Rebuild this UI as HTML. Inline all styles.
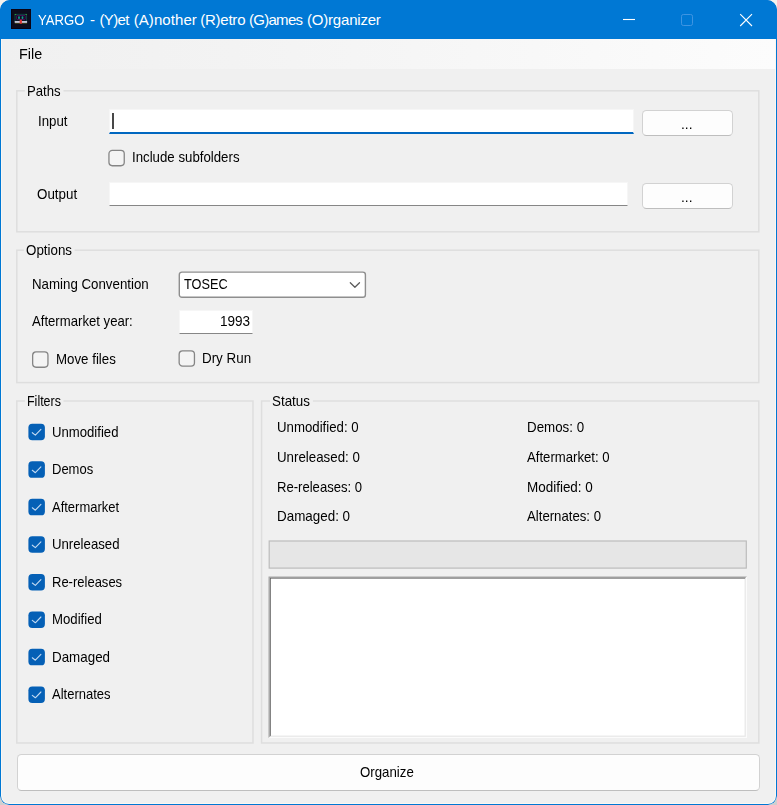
<!DOCTYPE html>
<html>
<head>
<meta charset="utf-8">
<title>YARGO</title>
<style>
html,body{margin:0;padding:0;}
body{width:777px;height:805px;overflow:hidden;background:#f4f2ee;position:relative;
  font-family:"Liberation Sans",sans-serif;font-size:15px;color:#000;}
#bgbot{position:absolute;left:0;top:780px;width:777px;height:25px;background:#cfcfcf;}
#win{position:absolute;left:0;top:0;width:777px;height:805px;border-radius:10px 10px 9px 9px;background:#f0f0f0;overflow:hidden;}
#frame{position:absolute;left:0;top:0;width:777px;height:805px;box-sizing:border-box;border:1px solid #0078d4;border-radius:10px 10px 9px 9px;pointer-events:none;}
#frame2{position:absolute;left:1px;top:39px;width:775px;height:765px;box-sizing:border-box;border:1px solid #fbf7f2;border-top:0;border-radius:0 0 8px 8px;pointer-events:none;}
#title{position:absolute;left:0;top:0;width:777px;height:39px;background:#0078d4;}
#title .t{position:absolute;font-size:15px;line-height:18px;color:#fff;white-space:nowrap;}
#menu{position:absolute;left:1px;top:39px;width:775px;height:30px;background:linear-gradient(90deg,#f0f0f0 0%,#f3f3f3 30%,#fcfcfc 100%);}
#menu .t{position:absolute;font-size:15px;line-height:18px;white-space:nowrap;transform-origin:0 0;}
.a{position:absolute;white-space:nowrap;}
.gb{position:absolute;border:1px solid #dcdcdc;box-sizing:border-box;}
.gl{position:absolute;line-height:16px;white-space:nowrap;transform-origin:0 0;background:#f0f0f0;box-shadow:-2px 0 0 #f0f0f0,2px 0 0 #f0f0f0;}
.l{position:absolute;line-height:16px;white-space:nowrap;transform-origin:0 0;}
.tb{position:absolute;background:#fff;box-sizing:border-box;border:1px solid #f6f6f6;border-bottom:1px solid #868686;}
.btn{position:absolute;box-sizing:border-box;border:1px solid #d2d2d2;border-bottom-color:#bebebe;border-radius:4.5px;background:#fdfdfd;}
.cb{position:absolute;width:16px;height:16px;box-sizing:border-box;border:1px solid #626262;border-radius:3.5px;background:#f5f5f5;}
.cbc{position:absolute;width:16px;height:16px;box-sizing:border-box;border-radius:3.5px;background:#0067c0;}
.cbc svg{position:absolute;left:0;top:0;}
</style>
</head>
<body>
<div id="bgbot"></div>
<div id="win">
<div id="title"><svg class="a" style="left:11px;top:9px;filter:blur(0.45px)" width="20" height="20" viewBox="0 0 20 20">
      <rect x="0" y="0" width="20" height="20" fill="#0a0212"/>
      <rect x="1" y="1" width="18" height="18" fill="#0d0c1c"/>
      <rect x="4" y="5.300" width="11.600" height="7" fill="none" stroke="#0f5a55" stroke-width="0.900" opacity="0.800"/>
      <rect x="3.800" y="5" width="1.400" height="0.900" fill="#3a9a40"/>
      <rect x="14.500" y="5" width="1.400" height="0.900" fill="#3a9a40"/>
      <rect x="5.600" y="6.500" width="8.600" height="4" rx="0.600" fill="none" stroke="#5e1570" stroke-width="0.900" opacity="0.750"/>
      <rect x="7.100" y="7.300" width="1.800" height="2.600" rx="0.700" fill="#129a8c"/>
      <rect x="10.600" y="7.300" width="1.800" height="2.600" rx="0.700" fill="#129a8c"/>
      <rect x="3.800" y="14" width="12.200" height="0.700" fill="#5a5a18" opacity="0.800"/>
      <rect x="3.700" y="12" width="12.400" height="1.900" fill="#c2c2d2"/>
      <rect x="8.700" y="10.700" width="2.200" height="4" fill="#e23434"/>
    </svg>
<span class="t" style="left:37.6px;top:11px;transform:scaleX(0.875);transform-origin:0 0">YARGO </span><span class="t" style="left:90px;top:11px;letter-spacing:0.0px">- </span><span class="t" style="left:99.4px;top:11px;letter-spacing:-0.6px">(Y)et </span><span class="t" style="left:133.7px;top:11px;letter-spacing:0.08px">(A)nother </span><span class="t" style="left:200.2px;top:11px;letter-spacing:-0.23px">(R)etro </span><span class="t" style="left:249px;top:11px;letter-spacing:-0.72px">(G)ames </span><span class="t" style="left:307px;top:11px;letter-spacing:-0.2px">(O)rganizer</span>
<svg class="a" style="left:611px;top:0" width="165" height="39" viewBox="0 0 165 39">
      <path d="M12 19.500H24" stroke="#fff" stroke-width="1.100" fill="none"/>
      <rect x="70.500" y="14.500" width="11" height="11" rx="1.800" fill="none" stroke="#3f95e2" stroke-width="1"/>
      <path d="M129.200 14.200L141 26M141 14.200L129.200 26" stroke="#fff" stroke-width="1.100" fill="none"/>
    </svg></div>
<div id="menu"><div class="t" style="left:18.0px;top:6px;transform:scaleX(0.957);">File</div></div>
<!-- Paths -->
<svg class="a" style="left:15px;top:89px" width="746" height="145" viewBox="0 0 746 145"><rect x="1.8" y="1.8" width="742.0" height="141.0" fill="none" stroke="#dedede" stroke-width="1.500"/><rect x="9.9" y="0" width="38.6" height="4" fill="#f0f0f0"/></svg>
<div class="l" style="left:26.7px;top:83px;transform:scaleX(0.876);">Paths</div>
<div class="l" style="left:38.0px;top:113px;transform:scaleX(0.884);">Input</div>
<div class="tb" style="left:109px;top:109px;width:525px;height:25px;border-bottom:2px solid #0067c0"></div>
<div class="a" style="left:112px;top:113px;width:2px;height:16px;background:#484848"></div>
<div class="btn" style="left:642px;top:110px;width:91px;height:26px"><span class="l" style="left:38px;top:5px;transform:scaleX(0.92)">...</span></div>
<svg class="a" style="left:108px;top:149px" width="19" height="19" viewBox="0 0 19 19"><rect x="0.95" y="1.45" width="15.3" height="15.3" rx="3.400" fill="#f4f4f4" stroke="#858585" stroke-width="1.300"/></svg>
<div class="l" style="left:132.1px;top:149px;transform:scaleX(0.883);">Include subfolders</div>
<div class="l" style="left:37.2px;top:186px;transform:scaleX(0.891);">Output</div>
<div class="tb" style="left:109px;top:182px;width:519px;height:24px"></div>
<div class="btn" style="left:642px;top:183px;width:91px;height:26px"><span class="l" style="left:38px;top:5px;transform:scaleX(0.92)">...</span></div>
<!-- Options -->
<svg class="a" style="left:15px;top:249px" width="746" height="136" viewBox="0 0 746 136"><rect x="1.8" y="1.2" width="742.0" height="132.4" fill="none" stroke="#dedede" stroke-width="1.500"/><rect x="8.9" y="0" width="50.7" height="4" fill="#f0f0f0"/></svg>
<div class="l" style="left:25.7px;top:242px;transform:scaleX(0.89);">Options</div>
<div class="l" style="left:31.6px;top:276px;transform:scaleX(0.886);">Naming Convention</div>
<svg class="a" style="left:178px;top:271px" width="190" height="28" viewBox="0 0 190 28"><rect x="1.300" y="1.100" width="186.100" height="25.200" rx="2.600" fill="#ffffff" stroke="#8e8e8e" stroke-width="1.400"/></svg>
<div class="l" style="left:183.5px;top:276px;transform:scaleX(0.849);">TOSEC</div>
<svg class="a" style="left:347px;top:278px" width="16" height="14" viewBox="0 0 16 14"><path d="M3.300 4.700L7.900 9.300L12.500 4.700" fill="none" stroke="#5a5a5a" stroke-width="1.250" stroke-linecap="round" stroke-linejoin="round"/></svg>
<div class="l" style="left:31.8px;top:313px;transform:scaleX(0.876);">Aftermarket year:</div>
<div class="tb" style="left:179px;top:310px;width:74px;height:24px"></div>
<div class="l" style="left:219.9px;top:313px;transform:scaleX(0.903);">1993</div>
<svg class="a" style="left:32px;top:351px" width="19" height="19" viewBox="0 0 19 19"><rect x="0.65" y="0.95" width="15.3" height="15.3" rx="3.400" fill="#f4f4f4" stroke="#858585" stroke-width="1.300"/></svg>
<div class="l" style="left:55.6px;top:351px;transform:scaleX(0.886);">Move files</div>
<svg class="a" style="left:178px;top:350px" width="19" height="19" viewBox="0 0 19 19"><rect x="1.15" y="0.85" width="15.3" height="15.3" rx="3.400" fill="#f4f4f4" stroke="#858585" stroke-width="1.300"/></svg>
<div class="l" style="left:202.1px;top:350px;transform:scaleX(0.892);">Dry Run</div>
<!-- Filters -->
<svg class="a" style="left:15px;top:400px" width="240" height="345" viewBox="0 0 240 345"><rect x="1.8" y="1.0" width="236.2" height="342.0" fill="none" stroke="#dedede" stroke-width="1.500"/><rect x="9.9" y="0" width="38.6" height="4" fill="#f0f0f0"/></svg>
<div class="l" style="left:26.8px;top:393px;transform:scaleX(0.831);">Filters</div>
<svg class="a" style="left:28px;top:423px" width="19" height="19" viewBox="0 0 19 19"><rect x="0.4" y="0.7" width="16.5" height="16.5" rx="3.900" fill="#0560b6"/><path d="M4.3 9.7L7.35 12.1L12.9 6.3" fill="none" stroke="#c4daf2" stroke-width="1.100" stroke-linecap="round" stroke-linejoin="round"/></svg>
<div class="l" style="left:51.9px;top:424px;transform:scaleX(0.876);">Unmodified</div>
<svg class="a" style="left:28px;top:461px" width="19" height="19" viewBox="0 0 19 19"><rect x="0.4" y="0.3" width="16.5" height="16.5" rx="3.900" fill="#0560b6"/><path d="M4.3 9.3L7.35 11.7L12.9 5.9" fill="none" stroke="#c4daf2" stroke-width="1.100" stroke-linecap="round" stroke-linejoin="round"/></svg>
<div class="l" style="left:51.9px;top:461px;transform:scaleX(0.867);">Demos</div>
<svg class="a" style="left:28px;top:498px" width="19" height="19" viewBox="0 0 19 19"><rect x="0.4" y="0.8" width="16.5" height="16.5" rx="3.900" fill="#0560b6"/><path d="M4.3 9.8L7.35 12.2L12.9 6.4" fill="none" stroke="#c4daf2" stroke-width="1.100" stroke-linecap="round" stroke-linejoin="round"/></svg>
<div class="l" style="left:52.1px;top:499px;transform:scaleX(0.865);">Aftermarket</div>
<svg class="a" style="left:28px;top:536px" width="19" height="19" viewBox="0 0 19 19"><rect x="0.4" y="0.2" width="16.5" height="16.5" rx="3.900" fill="#0560b6"/><path d="M4.3 9.2L7.35 11.6L12.9 5.8" fill="none" stroke="#c4daf2" stroke-width="1.100" stroke-linecap="round" stroke-linejoin="round"/></svg>
<div class="l" style="left:51.9px;top:536px;transform:scaleX(0.88);">Unreleased</div>
<svg class="a" style="left:28px;top:574px" width="19" height="19" viewBox="0 0 19 19"><rect x="0.4" y="0.0" width="16.5" height="16.5" rx="3.900" fill="#0560b6"/><path d="M4.3 9.0L7.35 11.4L12.9 5.6" fill="none" stroke="#c4daf2" stroke-width="1.100" stroke-linecap="round" stroke-linejoin="round"/></svg>
<div class="l" style="left:51.9px;top:574px;transform:scaleX(0.867);">Re-releases</div>
<svg class="a" style="left:28px;top:611px" width="19" height="19" viewBox="0 0 19 19"><rect x="0.4" y="0.4" width="16.5" height="16.5" rx="3.900" fill="#0560b6"/><path d="M4.3 9.4L7.35 11.8L12.9 6.0" fill="none" stroke="#c4daf2" stroke-width="1.100" stroke-linecap="round" stroke-linejoin="round"/></svg>
<div class="l" style="left:51.9px;top:611px;transform:scaleX(0.88);">Modified</div>
<svg class="a" style="left:28px;top:648px" width="19" height="19" viewBox="0 0 19 19"><rect x="0.4" y="0.8" width="16.5" height="16.5" rx="3.900" fill="#0560b6"/><path d="M4.3 9.8L7.35 12.2L12.9 6.4" fill="none" stroke="#c4daf2" stroke-width="1.100" stroke-linecap="round" stroke-linejoin="round"/></svg>
<div class="l" style="left:51.9px;top:649px;transform:scaleX(0.892);">Damaged</div>
<svg class="a" style="left:28px;top:686px" width="19" height="19" viewBox="0 0 19 19"><rect x="0.4" y="0.4" width="16.5" height="16.5" rx="3.900" fill="#0560b6"/><path d="M4.3 9.4L7.35 11.8L12.9 6.0" fill="none" stroke="#c4daf2" stroke-width="1.100" stroke-linecap="round" stroke-linejoin="round"/></svg>
<div class="l" style="left:52.1px;top:686px;transform:scaleX(0.866);">Alternates</div>
<!-- Status -->
<svg class="a" style="left:260px;top:400px" width="501" height="345" viewBox="0 0 501 345"><rect x="1.6" y="1.0" width="497.2" height="342.0" fill="none" stroke="#dedede" stroke-width="1.500"/><rect x="10.1" y="0" width="42.8" height="4" fill="#f0f0f0"/></svg>
<div class="l" style="left:271.9px;top:393px;transform:scaleX(0.893);">Status</div>
<div class="l" style="left:277.1px;top:419px;transform:scaleX(0.882);">Unmodified: 0</div>
<div class="l" style="left:526.7px;top:419px;transform:scaleX(0.889);">Demos: 0</div>
<div class="l" style="left:277.1px;top:449px;transform:scaleX(0.887);">Unreleased: 0</div>
<div class="l" style="left:526.9px;top:449px;transform:scaleX(0.877);">Aftermarket: 0</div>
<div class="l" style="left:277.1px;top:479px;transform:scaleX(0.872);">Re-releases: 0</div>
<div class="l" style="left:526.7px;top:479px;transform:scaleX(0.897);">Modified: 0</div>
<div class="l" style="left:277.1px;top:508px;transform:scaleX(0.894);">Damaged: 0</div>
<div class="l" style="left:526.9px;top:508px;transform:scaleX(0.879);">Alternates: 0</div>
<svg class="a" style="left:268px;top:540px" width="480" height="30" viewBox="0 0 480 30"><rect x="1.200" y="1" width="477.100" height="27.100" fill="#e6e6e6" stroke="#bcbcbc" stroke-width="1.200"/></svg>
<svg class="a" style="left:268px;top:576px" width="481" height="164" viewBox="0 0 481 164"><rect x="0.5" y="0.4" width="478.5" height="161.6" fill="#fbfbfb"/><polygon points="0.5,0.4 479.0,0.4 477.8,1.6 1.7,1.6 1.7,160.8 0.5,162.0" fill="#a0a0a0"/><rect x="1.7" y="1.6" width="476.1" height="159.2" fill="#e6e6e6"/><polygon points="1.7,1.6 477.8,1.6 476.6,2.8 2.9,2.8 2.9,159.6 1.7,160.8" fill="#696969"/><rect x="2.9" y="2.8" width="473.7" height="156.8" fill="#ffffff"/></svg>
<!-- Organize -->
<div class="btn" style="left:17px;top:754px;width:743px;height:37px"><span class="l" style="left:341.8px;top:9px;transform:scaleX(0.883)">Organize</span></div>
<div id="frame2"></div><div id="frame"></div>
</div>
</body>
</html>
